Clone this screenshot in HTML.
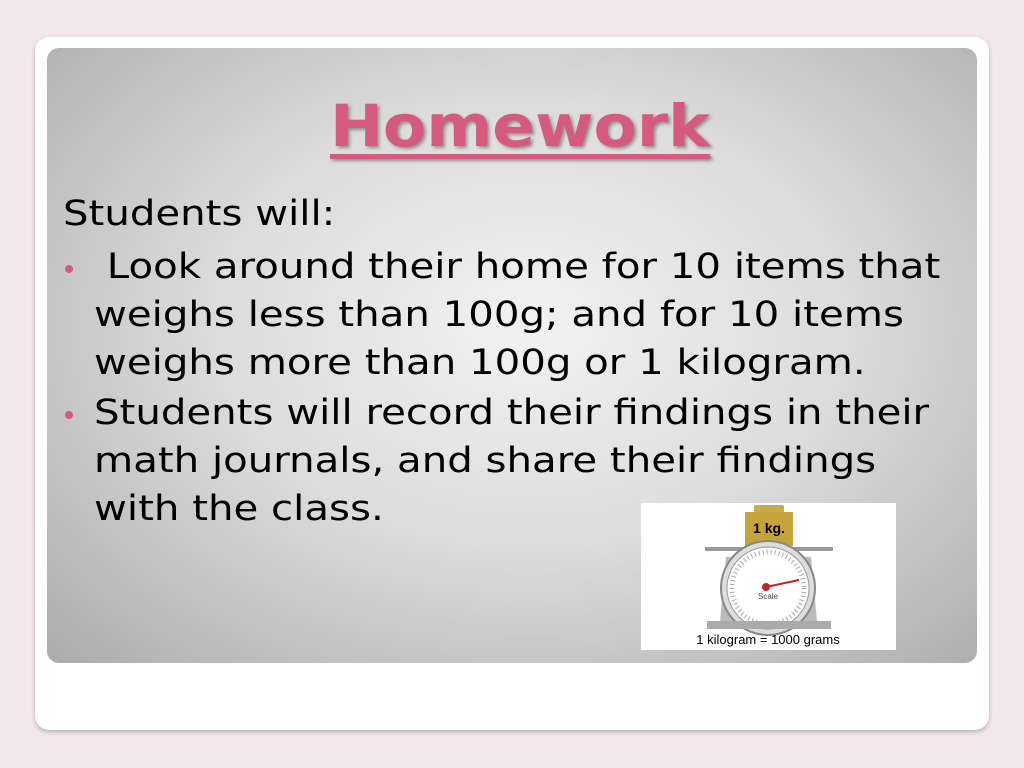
<!DOCTYPE html>
<html><head><style>
body{margin:0;width:1024px;height:768px;background:#f4e7eb;position:relative;overflow:hidden;font-family:"DejaVu Sans",sans-serif}
.card{position:absolute;left:35px;top:37px;width:954px;height:693px;background:#fff;border-radius:14px;box-shadow:0 2px 4px rgba(0,0,0,.25)}
.panel{position:absolute;left:47px;top:48px;width:930px;height:615px;border-radius:12px;background:radial-gradient(ellipse 75% 80% at 52% 45%,#f2f2f2 0%,#dcdcdc 45%,#a9a9a9 100%)}
h1{position:absolute;left:330px;top:92px;margin:0;font:bold 58px "DejaVu Sans",sans-serif;color:#d65a80;text-decoration:underline;text-decoration-thickness:5px;text-underline-offset:8px;text-shadow:2px 2px 3px rgba(0,0,0,.35);transform:scaleX(1.09);transform-origin:left top;white-space:nowrap}
.t{position:absolute;font-size:35px;color:#000;line-height:48px;white-space:nowrap;transform:scaleX(1.15);transform-origin:left top}
.b{position:absolute;width:8px;height:8px;border-radius:50%;background:#d65a80}
</style></head><body>
<div class="card"></div><div class="panel"></div>
<h1>Homework</h1>
<div class="t" style="left:63px;top:190px">Students will:</div>
<div class="b" style="left:65px;top:265px"></div>
<div class="t" style="left:94px;top:243px">&nbsp;Look around their home for 10 items that<br>weighs less than 100g; and for 10 items<br>weighs more than 100g or 1 kilogram.</div>
<div class="b" style="left:65px;top:411px"></div>
<div class="t" style="left:94px;top:389px">Students will record their findings in their<br>math journals, and share their findings<br>with the class.</div>
<svg style="position:absolute;left:641px;top:503px" width="255" height="147" viewBox="0 0 255 147">
<rect width="255" height="147" fill="#fff"/>
<rect x="113" y="2" width="30" height="8" rx="2" fill="#c9a94a"/>
<rect x="104" y="9" width="48" height="34" fill="#c7a33c"/>
<text x="128" y="30" text-anchor="middle" font-family="Liberation Sans" font-weight="bold" font-size="14">1 kg.</text>
<rect x="64" y="44" width="128" height="4" fill="#999"/>
<rect x="122" y="48" width="11" height="5" fill="#777"/>
<path d="M85 54 H170 L176 118 H79 Z" fill="#bbb"/>
<circle cx="127" cy="85" r="47" fill="#ddd" stroke="#888" stroke-width="2"/>
<circle cx="127" cy="85" r="41" fill="#fff" stroke="#999"/>
<circle cx="127" cy="85" r="36" fill="none" stroke="#aaa" stroke-width="5" stroke-dasharray="1 3"/>
<line x1="125" y1="84" x2="158" y2="77" stroke="#c22" stroke-width="2"/>
<circle cx="125" cy="84" r="4" fill="#c22"/>
<text x="127" y="96" text-anchor="middle" font-family="Liberation Sans" font-size="8" fill="#444">Scale</text>
<rect x="66" y="118" width="124" height="8" fill="#aaa"/>
<text x="127" y="141" text-anchor="middle" font-family="Liberation Sans" font-size="13">1 kilogram = 1000 grams</text>
</svg>
</body></html>
